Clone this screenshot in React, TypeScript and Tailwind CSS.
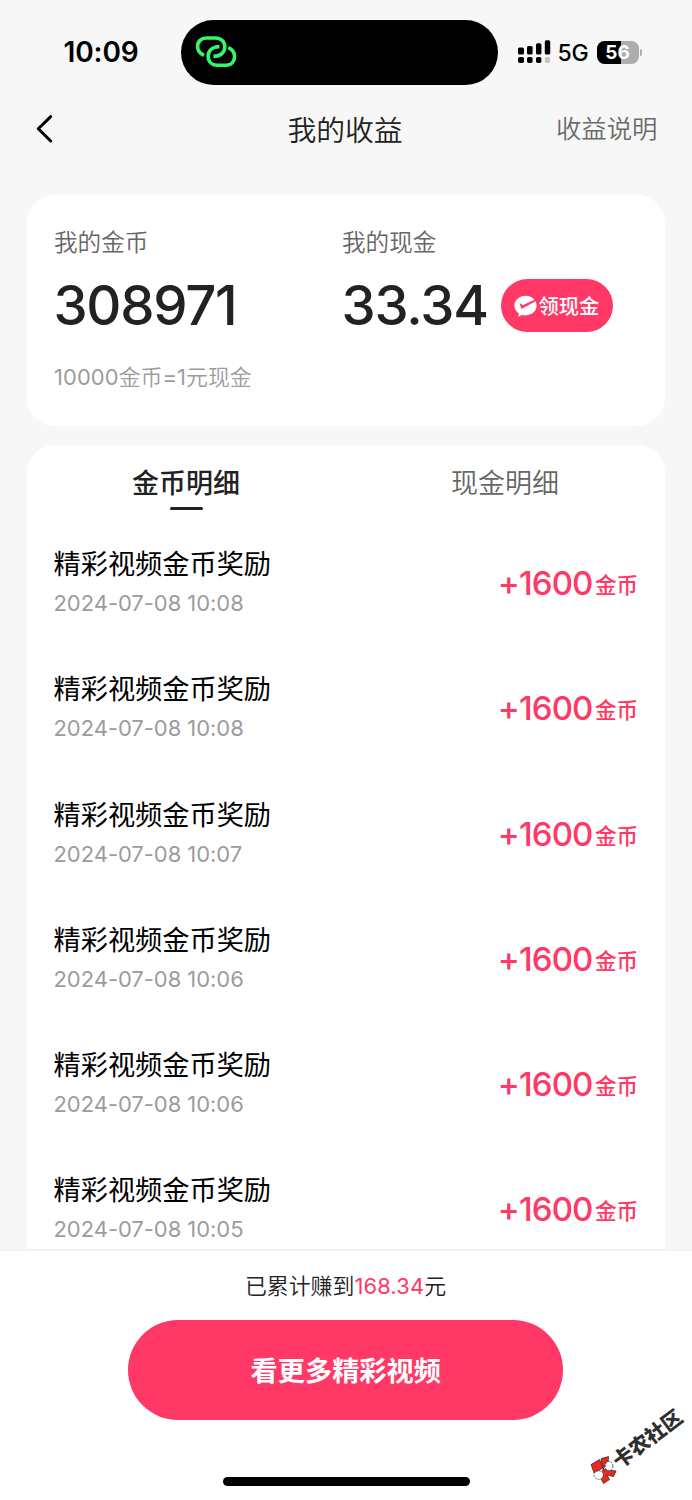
import React from 'react';

interface RewardRecord {
  title: string;
  time: string;
  amount: number;
}

const RECORDS: RewardRecord[] = [
  { title: '精彩视频金币奖励', time: '2024-07-08 10:08', amount: 1600 },
  { title: '精彩视频金币奖励', time: '2024-07-08 10:08', amount: 1600 },
  { title: '精彩视频金币奖励', time: '2024-07-08 10:07', amount: 1600 },
  { title: '精彩视频金币奖励', time: '2024-07-08 10:06', amount: 1600 },
  { title: '精彩视频金币奖励', time: '2024-07-08 10:06', amount: 1600 },
  { title: '精彩视频金币奖励', time: '2024-07-08 10:05', amount: 1600 },
];

const LinkIcon: React.FC = () => (
  <svg className="h-[34px] w-[42px]" viewBox="0 0 42 34" fill="none" stroke="#34f769" strokeWidth="3.6">
    <path d="M9 20.3 C5.2 18.6 2.6 15.6 2.6 11.5 C2.6 6.4 6.2 3 11.2 3 H20.5 C26 3 29.8 6.8 29.8 11.8 C29.8 17.2 25.8 21.2 18.4 21.4" />
    <path d="M24.4 11.6 C17.4 11.8 13.2 15.7 13.2 21.2 C13.2 26.8 17 30.2 22.2 30.2 H31 C36.2 30.2 39.6 26.6 39.6 21.6 C39.6 17.2 37 14.2 33.2 12.6" />
  </svg>
);

const SignalIcon: React.FC = () => (
  <svg className="h-[24px] w-[33px]" viewBox="0 0 33 24">
    <rect x="0" y="7.5" width="6" height="7" rx="1.6" />
    <rect x="9" y="6" width="5.6" height="8.5" rx="1.6" />
    <rect x="18" y="3.2" width="5.4" height="11.3" rx="1.6" />
    <rect x="26.8" y="0.3" width="5.4" height="14.2" rx="1.6" />
    <rect x="0" y="17" width="6" height="6" rx="1.8" />
    <rect x="9" y="17" width="5.6" height="6" rx="1.8" />
    <rect x="18" y="17" width="5.4" height="6" rx="1.8" />
    <rect x="26.8" y="17" width="5.4" height="6" rx="1.8" fill="#c6c6c6" />
  </svg>
);

const StatusBar: React.FC = () => (
  <div className="flex h-[104px] pt-5 text-black">
    <div className="mt-[12px] w-[181px] pl-[63.5px] text-[28px] leading-[40px] font-semibold tracking-[-0.1px]">
      10:09
    </div>
    <div className="flex h-[64.5px] w-[316.5px] items-center rounded-full bg-black pl-[14px]">
      <LinkIcon />
    </div>
    <div className="flex h-[64px] items-center pl-[20px]">
      <SignalIcon />
      <span className="mt-[2px] ml-[7px] w-[39px] text-[23px] leading-none font-medium tracking-[-0.3px]">5G</span>
      <div className="flex h-[23px] w-[42px] items-center justify-center rounded-[7.5px] bg-[linear-gradient(90deg,#000_57%,#adadad_57%)] text-[19px] leading-none font-bold text-white">
        56
      </div>
      <div className="ml-[1.5px] h-[7px] w-[2px] rounded-r-full bg-[#adadad]" />
    </div>
  </div>
);

const NavBar: React.FC = () => (
  <div className="grid h-[91px] grid-cols-3">
    <svg className="mt-[9px] ml-[34px] h-[32px] w-[20px]" viewBox="0 0 20 32" fill="none" stroke="#000" strokeWidth="3" strokeLinecap="round" strokeLinejoin="round">
      <path d="M16.7 3.6 L4.3 15.8 L16.7 28" />
    </svg>
    <h1 className="pt-[2px] pr-[2px] text-center text-[28.8px] leading-[50px] font-[350] text-[#222]">我的收益</h1>
    <span className="pt-[1px] pr-[34.5px] text-right text-[25.4px] leading-[48px] font-[350] text-[#6b6b6b]">收益说明</span>
  </div>
);

const BalanceCard: React.FC = () => (
  <section className="h-[230.5px] rounded-[28px] bg-white px-[27px] pt-[30px]">
    <div className="flex">
      <div className="w-[288px]">
        <div className="text-[23.6px] leading-[36px] font-[350] text-[#666]">我的金币</div>
        <div className="mt-[11px] -ml-[0.5px] text-[54.5px] leading-[66px] font-[550] tracking-[-1.3px] text-[#222]">308971</div>
      </div>
      <div>
        <div className="text-[23.6px] leading-[36px] font-[350] text-[#666]">我的现金</div>
        <div className="mt-[11px] flex items-center">
          <div className="-ml-[0.5px] w-[159.5px] text-[54.5px] leading-[66px] font-[550] tracking-[-1.2px] text-[#222]">33.34</div>
          <button className="flex h-[53px] w-[112px] items-center rounded-full bg-[#ff3866] pl-[13px] text-[20.3px] leading-[30px] font-medium text-white">
            <svg className="mt-[2px] mr-[1.5px] h-[22px] w-[23px] shrink-0" viewBox="0 0 23 22">
              <path fill="#fff" d="M11.5 0.8 C17.8 0.8 22.6 5.2 22.6 10.6 C22.6 16.2 17.8 20.4 11.5 20.4 C10.2 20.4 9 20.2 8 19.9 L4.4 21.8 L4.8 18.4 C2 16.6 0.4 13.8 0.4 10.6 C0.4 5.2 5.2 0.8 11.5 0.8 Z" />
              <path fill="#ff3866" d="M5.6 8 L8.8 10.2 L20.5 4.8 L21.6 6.2 L8.3 13.6 Q7.5 14 7.1 13.2 Z" />
            </svg>
            <span className="mt-[3px] whitespace-nowrap">领现金</span>
          </button>
        </div>
      </div>
    </div>
    <div className="mt-[23px] text-[21.9px] leading-[32px] text-[#9c9c9c]">
      <span className="tracking-[0.1px]">10000</span>
      <span className="font-[350]">金币</span>
      <span className="tracking-[0.1px]">=1</span>
      <span className="font-[350]">元现金</span>
    </div>
  </section>
);

const RecordRow: React.FC<{ record: RewardRecord }> = ({ record }) => (
  <li className="flex h-[125.3px] shrink-0 items-start justify-between px-[27px]">
    <div className="-ml-[0.5px]">
      <div className="text-[27.2px] leading-[40px] font-normal text-black">{record.title}</div>
      <div className="mt-[3px] text-[22px] leading-[30px] tracking-[-0.05px] text-[#9c9c9c]">{record.time}</div>
    </div>
    <div className="mt-[15px] flex items-start font-medium text-[#ff3866]">
      <span className="text-[33px] leading-[46px] tracking-[-0.9px]">+{record.amount}</span>
      <span className="mt-[4px] ml-[2.5px] text-[21.5px] leading-[42px]">金币</span>
    </div>
  </li>
);

const RecordCard: React.FC = () => (
  <section className="mt-[19.5px] flex h-[804px] flex-col overflow-hidden rounded-t-[28px] bg-white">
    <div className="grid grid-cols-2 text-center text-[27px] leading-[40px]">
      <div className="flex flex-col items-center pt-[19px] font-medium text-[#222]">
        <span className="-ml-[1px]">金币明细</span>
        <span className="mt-[3px] h-[3px] w-[33px] rounded-full bg-[#222]" />
      </div>
      <div className="pt-[19px] pr-[1px] font-[350] text-[#666]">现金明细</div>
    </div>
    <ul className="mt-[35px] flex flex-col">
      {RECORDS.map((record, i) => (
        <RecordRow key={i} record={record} />
      ))}
    </ul>
  </section>
);

// Forum stamp, tilted over the lower right corner
const Watermark: React.FC = () => (
  <div className="absolute top-[1431px] left-[582px] flex h-[30px] w-[110px] origin-center -rotate-37 items-center">
    <svg className="mb-[2px] h-[27px] w-[27px] shrink-0 overflow-visible" viewBox="0 0 27 27" stroke="#222" strokeWidth="0.7">
      <g transform="rotate(37 13.5 13.5)">
        <path fill="#e52a20" d="M1 7.5 L9.5 2.5 L13.5 10.5 L4 16 Z" />
        <path fill="#e52a20" d="M11 1.5 L18.5 -0.5 L18 6 L13 12 Z" />
        <path fill="#e52a20" d="M13 12 L26 14 L23.5 19.5 L17 18 L19.5 22.5 L13.5 26.5 L10.5 21 Z" />
        <ellipse cx="19" cy="9" rx="3.9" ry="4.6" fill="#fff" strokeDasharray="2 1" />
        <ellipse cx="8.6" cy="18" rx="4.8" ry="4.2" fill="#fff" strokeDasharray="2 1" />
      </g>
    </svg>
    <span className="mt-[2px] text-[20.3px] leading-none font-black whitespace-nowrap text-[#2f2f2f]">卡农社区</span>
  </div>
);

const Footer: React.FC = () => (
  <footer className="flex h-[251px] flex-col items-center border-t-2 border-[#f2f2f2] bg-white">
    <p className="mt-[19px] pr-[1px] text-[21.9px] leading-[32px] font-[350] text-[#222]">
      已累计赚到<span className="font-normal tracking-[0.15px] text-[#ff3866]">168.34</span>元
    </p>
    <button className="mt-[18px] mr-[0.5px] h-[100px] w-[435px] rounded-full bg-[#ff3866] pt-[4px] text-[27.2px] font-bold text-white">
      看更多精彩视频
    </button>
    <div className="mt-[57px] h-[9px] w-[247px] rounded-full bg-black" />
  </footer>
);

export default function App() {
  return (
    <div className="relative h-[1500px] w-[692px] overflow-hidden bg-[#f7f7f7] font-[Inter,'Noto_Sans_CJK_SC',sans-serif]">
      <StatusBar />
      <NavBar />
      <main className="px-[27px]">
        <BalanceCard />
        <RecordCard />
      </main>
      <Footer />
      <Watermark />
    </div>
  );
}
